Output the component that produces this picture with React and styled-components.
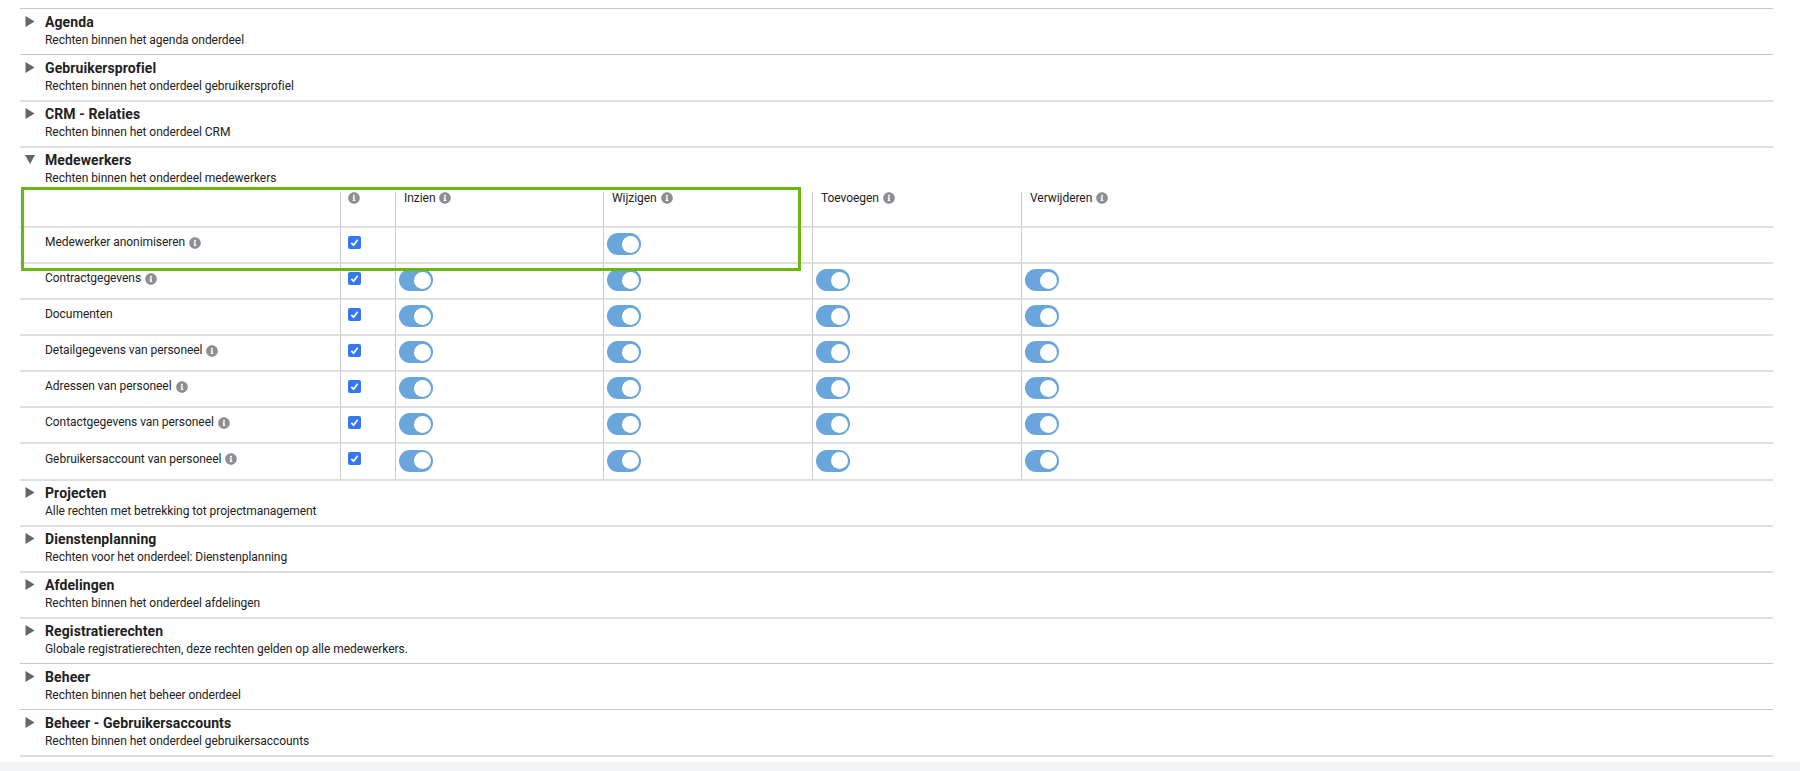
import React from 'react';
import styled, { createGlobalStyle } from 'styled-components';
import { FaInfoCircle } from 'react-icons/fa';

const GlobalStyle = createGlobalStyle`
  html, body {
    margin: 0;
    padding: 0;
    background: #fff;
    overflow: hidden;
  }
  body {
    font-family: Roboto, 'Liberation Sans', sans-serif;
    color: #222;
  }
`;

const Page = styled.div`
  height: 771px;
  display: flex;
  flex-direction: column;
`;

const List = styled.div`
  flex: 1;
  padding: 8px 27px 0 20px;
  position: relative;
`;

const Section = styled.section`
  border-top: ${(props) => (props.thin ? '1px solid #c6c6c6' : '2px solid #dfdfdf')};
  &:last-of-type {
    border-bottom: 2px solid #dfdfdf;
  }
`;

const SectionHead = styled.div`
  display: flex;
  height: ${(props) => (props.thin ? '45px' : '44px')};
  box-sizing: border-box;
  padding-top: ${(props) => (props.thin ? '4px' : '3px')};
`;

const Arrow = styled.svg`
  width: 10px;
  height: 11px;
  margin: 3px 10px 0 5px;
  fill: #666;
  flex: none;
`;

const Title = styled.div`
  font-size: 14px;
  line-height: 19px;
  font-weight: 700;
  letter-spacing: 0.1px;
  color: #222;
`;

const Subtitle = styled.div`
  font-size: 12px;
  line-height: 16px;
  letter-spacing: -0.05px;
  color: #222;
`;

const Grid = styled.div`
  display: grid;
  grid-template-columns: 320px 55px 208px 209px 209px 1fr;
`;

const Cell = styled.div`
  height: 36px;
  box-sizing: border-box;
  border-bottom: 2px solid #dfdfdf;
  border-left: 1px solid #cbcbcb;
  padding-left: 8px;
  display: flex;
  align-items: center;
  font-size: 12px;
  line-height: 15px;
  letter-spacing: -0.05px;
  color: #222;
  &.last {
    height: 35px;
    border-bottom: none;
  }
`;

const HeadCell = styled(Cell)`
  align-items: flex-start;
  line-height: 13px;
`;

const BoxCell = styled(Cell)`
  padding-left: 7px;
`;

const NameCell = styled(Cell)`
  border-left: none;
  padding: 0 0 5px 25px;
`;

const Info = styled(FaInfoCircle)`
  width: 12px;
  height: 12px;
  color: #8e8e93;
  margin-left: ${(props) => (props.$bare ? '0' : '4px')};
  flex: none;
`;

const Check = styled.span`
  width: 13px;
  height: 13px;
  margin-bottom: 6px;
  border-radius: 2px;
  background: #3478f0;
  display: flex;
  align-items: center;
  justify-content: center;
  svg {
    width: 9px;
    height: 9px;
    fill: none;
    stroke: #fff;
    stroke-width: 2;
  }
`;

const Toggle = styled.span`
  width: 34px;
  height: 22px;
  margin-left: -5px;
  margin-bottom: 2px;
  border-radius: 11px;
  background: #6aa5dc;
  box-sizing: border-box;
  padding: 2.5px;
  display: flex;
  justify-content: flex-end;
  &::after {
    content: '';
    width: 17px;
    height: 17px;
    border-radius: 50%;
    background: #fff;
  }
`;

const Highlight = styled.div`
  position: absolute;
  left: 21px;
  top: 187px;
  width: 780px;
  height: 84px;
  box-sizing: border-box;
  border: 3px solid #6ab70f;
  pointer-events: none;
`;

const Footer = styled.div`
  height: 9px;
  background: #f2f3f5;
`;

const sectionsBefore = [
  { title: 'Agenda', sub: 'Rechten binnen het agenda onderdeel', thin: true },
  { title: 'Gebruikersprofiel', sub: 'Rechten binnen het onderdeel gebruikersprofiel', thin: true },
  { title: 'CRM - Relaties', sub: 'Rechten binnen het onderdeel CRM' },
];

const sectionsAfter = [
  { title: 'Projecten', sub: 'Alle rechten met betrekking tot projectmanagement' },
  { title: 'Dienstenplanning', sub: 'Rechten voor het onderdeel: Dienstenplanning' },
  { title: 'Afdelingen', sub: 'Rechten binnen het onderdeel afdelingen' },
  { title: 'Registratierechten', sub: 'Globale registratierechten, deze rechten gelden op alle medewerkers.' },
  { title: 'Beheer', sub: 'Rechten binnen het beheer onderdeel', thin: true },
  { title: 'Beheer - Gebruikersaccounts', sub: 'Rechten binnen het onderdeel gebruikersaccounts', thin: true },
];

const rows = [
  { name: 'Contractgegevens', info: true },
  { name: 'Documenten' },
  { name: 'Detailgegevens van personeel', info: true },
  { name: 'Adressen van personeel', info: true },
  { name: 'Contactgegevens van personeel', info: true },
  { name: 'Gebruikersaccount van personeel', info: true },
];

const columns = ['Inzien', 'Wijzigen', 'Toevoegen', 'Verwijderen'];

const Head = ({ title, sub, thin, open }) => (
  <SectionHead thin={thin}>
    <Arrow viewBox="0 0 10 11">
      {open ? <polygon points="0,1 10,1 5,10" /> : <polygon points="0.5,0 9.5,5.5 0.5,11" />}
    </Arrow>
    <div>
      <Title>{title}</Title>
      <Subtitle>{sub}</Subtitle>
    </div>
  </SectionHead>
);

const CheckBox = () => (
  <Check>
    <svg viewBox="0 0 10 10">
      <path d="M1.5 5.5 L4 8 L8.5 2" />
    </svg>
  </Check>
);

const App = () => (
  <Page>
    <GlobalStyle />
    <List>
      {sectionsBefore.map((s) => (
        <Section key={s.title} thin={s.thin}>
          <Head {...s} />
        </Section>
      ))}
      <Section>
        <Head title="Medewerkers" sub="Rechten binnen het onderdeel medewerkers" open />
        <Grid>
          <NameCell />
          <BoxCell as={HeadCell}>
            <Info $bare />
          </BoxCell>
          {columns.map((c) => (
            <HeadCell key={c}>
              {c}
              <Info />
            </HeadCell>
          ))}

          <NameCell>
            Medewerker anonimiseren
            <Info />
          </NameCell>
          <BoxCell>
            <CheckBox />
          </BoxCell>
          <Cell />
          <Cell>
            <Toggle />
          </Cell>
          <Cell />
          <Cell />

          {rows.map((r, i) => {
            const last = i === rows.length - 1 ? 'last' : undefined;
            return (
              <React.Fragment key={r.name}>
                <NameCell className={last}>
                  {r.name}
                  {r.info && <Info />}
                </NameCell>
                <BoxCell className={last}>
                  <CheckBox />
                </BoxCell>
                {columns.map((c) => (
                  <Cell key={c} className={last}>
                    <Toggle />
                  </Cell>
                ))}
              </React.Fragment>
            );
          })}
        </Grid>
      </Section>
      {sectionsAfter.map((s) => (
        <Section key={s.title} thin={s.thin}>
          <Head {...s} />
        </Section>
      ))}
      <Highlight />
    </List>
    <Footer />
  </Page>
);

export default App;
